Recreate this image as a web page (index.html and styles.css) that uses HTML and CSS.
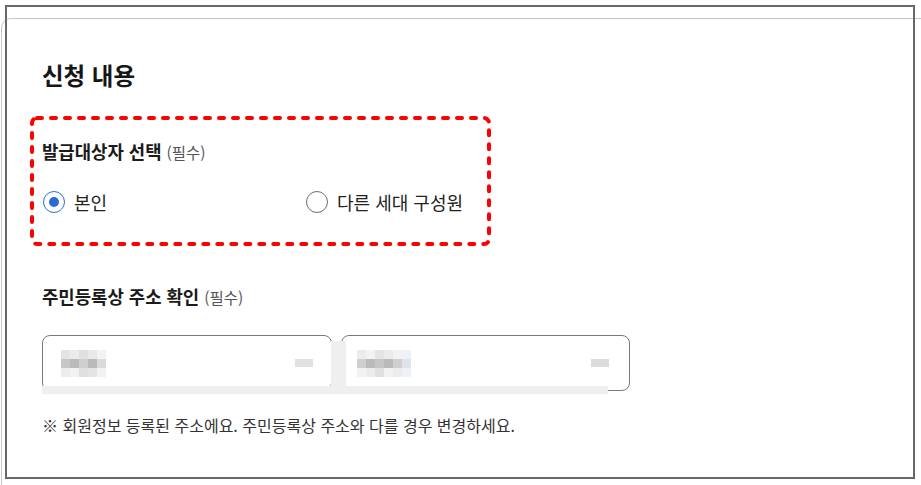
FILE: index.html
```html
<!DOCTYPE html>
<html lang="ko">
<head>
<meta charset="utf-8">
<title>신청 내용</title>
<link rel="stylesheet" href="styles.css">
</head>
<body>
<div class="page">
  <div class="card">
    <h2 class="title">신청 내용</h2>
    <section class="target">
      <svg class="dash" width="461" height="130" viewBox="0 0 461 130" aria-hidden="true">
        <rect x="2" y="2" width="457" height="126" rx="5" ry="5" fill="none" stroke="#ff0000" stroke-width="4" stroke-dasharray="5 9" stroke-linecap="round"/>
      </svg>
      <div class="label">발급대상자 선택 <span class="req">(필수)</span></div>
      <div class="radios">
        <label class="radio"><span class="dot on"></span>본인</label>
        <label class="radio"><span class="dot"></span>다른 세대 구성원</label>
      </div>
    </section>
    <div class="label sec2">주민등록상 주소 확인 <span class="req">(필수)</span></div>
    <div class="inputs">
      <div class="field f1">
        <div class="px">
          <i class="a"></i><i class="b"></i><i class="c"></i><i class="d"></i><i class="e"></i>
          <i class="f"></i><i class="g"></i><i class="h"></i><i class="g"></i><i class="i"></i>
          <i class="j"></i><i class="e"></i><i class="c"></i><i class="a"></i><i class="e"></i>
        </div>
        <span class="mini"></span>
        <span class="strip-b"></span>
      </div>
      <div class="field f2">
        <div class="px">
          <i class="b"></i><i class="e"></i><i class="a"></i><i class="b"></i><i class="e"></i><i class="k"></i>
          <i class="h"></i><i class="g"></i><i class="f"></i><i class="g"></i><i class="h"></i><i class="l"></i>
          <i class="e"></i><i class="j"></i><i class="c"></i><i class="e"></i><i class="j"></i><i class="k"></i>
        </div>
        <span class="mini"></span>
        <span class="strip-l"></span>
        <span class="strip-b"></span>
      </div>
    </div>
    <p class="note">※ 회원정보 등록된 주소에요. 주민등록상 주소와 다를 경우 변경하세요.</p>
  </div>
  <div class="frame"></div>
</div>
</body>
</html>
```

FILE: styles.css
```css
html, body {
  margin: 0;
  padding: 0;
  background: #ffffff;
  overflow: hidden;
  width: 921px;
  height: 485px;
}

.page {
  position: relative;
  width: 921px;
  height: 485px;
  overflow: hidden;
  font-family: "Noto Sans CJK KR", "Noto Sans", sans-serif;
  color: #1b1b1b;
}

.card {
  margin: 18px 0 0 1px;
  width: 960px;
  height: 520px;
  box-sizing: border-box;
  border: 1px solid #c6c6c6;
  border-radius: 10px;
  padding: 41px 0 0 40px;
  display: flex;
  flex-direction: column;
  align-items: flex-start;
}

.title {
  margin: 0;
  font-size: 23.5px;
  line-height: 30px;
  font-weight: 700;
  color: #161616;
}

.target {
  position: relative;
  margin: 26px 0 0 -12px;
  width: 461px;
  height: 130px;
  box-sizing: border-box;
  padding: 23px 12px 0 12px;
}

.dash {
  position: absolute;
  left: 0;
  top: 0;
}

.label {
  font-size: 17.8px;
  line-height: 24px;
  font-weight: 700;
  color: #1b1b1b;
}

.req {
  font-size: 15.5px;
  font-weight: 400;
  color: #555555;
}

.radios {
  margin-top: 26px;
  display: grid;
  grid-template-columns: 263px auto;
  height: 24px;
}

.radio {
  display: flex;
  align-items: center;
  gap: 9px;
  font-size: 18px;
  line-height: 24px;
  color: #222222;
}

.dot {
  margin-left: 1px;
  width: 22px;
  height: 22px;
  box-sizing: border-box;
  border: 1.5px solid #6e6e6e;
  border-radius: 50%;
  display: flex;
  align-items: center;
  justify-content: center;
}

.dot.on {
  border-color: #2f6fd8;
}

.dot.on::before {
  content: "";
  width: 10px;
  height: 10px;
  border-radius: 50%;
  background: #2a6ad6;
}

.sec2 {
  margin-top: 38px;
}

.inputs {
  margin-top: 26px;
  display: flex;
  gap: 9px;
}

.field {
  position: relative;
  width: 290px;
  height: 56px;
  box-sizing: border-box;
  border: 1px solid #7a7a7a;
  border-radius: 8px;
  background: #ffffff;
}

.f2 {
  width: 289px;
}

.px {
  position: absolute;
  left: 18px;
  top: 14px;
  display: grid;
  grid-template-columns: repeat(5, 9px);
  grid-auto-rows: 9px;
}

.f2 .px {
  left: 15px;
  grid-template-columns: repeat(6, 9px);
}

.px i { display: block; }
.px .a { background: #e4e4e4; }
.px .b { background: #ebebeb; }
.px .c { background: #e0e0e0; }
.px .d { background: #e8e8e8; }
.px .e { background: #f2f2f2; }
.px .f { background: #c6c6c6; }
.px .g { background: #bababa; }
.px .h { background: #cfcfcf; }
.px .i { background: #dadada; }
.px .j { background: #ececec; }
.px .k { background: #eef2f8; }
.px .l { background: #dde4ee; }

.mini {
  position: absolute;
  left: 252px;
  top: 23px;
  width: 18px;
  height: 8px;
  background: #e1e1e1;
}

.f2 .mini {
  left: 249px;
  background: #dcdcdc;
}

.strip-b {
  position: absolute;
  left: -1px;
  top: 50px;
  width: 289px;
  height: 8px;
  background: #efefef;
}

.f2 .strip-b {
  left: -2px;
  width: 268px;
}

.strip-l {
  position: absolute;
  left: -11px;
  top: 5px;
  width: 15px;
  height: 53px;
  background: #efefef;
}

.note {
  margin: 23px 0 0 0;
  font-size: 16px;
  line-height: 22px;
  color: #333333;
}

.frame {
  position: absolute;
  left: 5px;
  top: 5px;
  width: 910px;
  height: 474px;
  box-sizing: border-box;
  border: 2px solid #686868;
  pointer-events: none;
}
```
